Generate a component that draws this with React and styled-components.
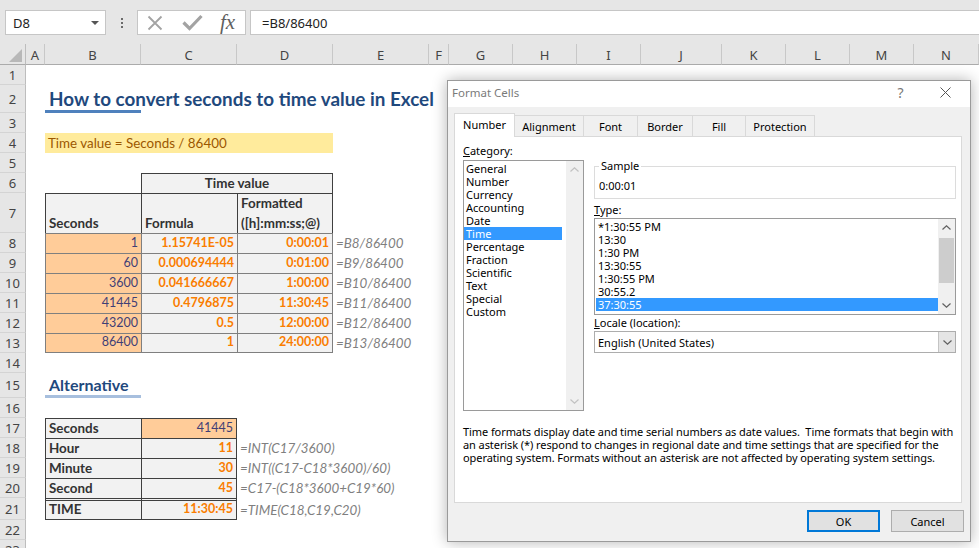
import React from 'react'
import styled, { createGlobalStyle, css } from 'styled-components'

const GlobalStyle = createGlobalStyle`
  html, body {
    margin: 0;
    padding: 0;
    background: #fff;
    overflow: hidden;
  }
  * {
    box-sizing: border-box;
  }
`

const COL_LETTERS = ['A', 'B', 'C', 'D', 'E', 'F', 'G', 'H', 'I', 'J', 'K', 'L', 'M', 'N']
const COL_WIDTHS = [26, 19, 96, 96, 96, 96, 20, 64, 64, 64, 81, 64, 64, 64, 65]
// sheet rows 1..23
const ROW_HEIGHTS = [20, 28, 20, 20, 20, 20, 40, 20, 20, 20, 20, 20, 20, 20, 25, 20, 20, 20, 20, 20, 22, 20, 20]
const col = (letter) => COL_LETTERS.indexOf(letter) + 2

const Window = styled.div`
  position: relative;
  width: 979px;
  height: 548px;
  overflow: hidden;
  background: #fff;
  font-family: Lato, 'Liberation Sans', sans-serif;
`

/* ---------- formula bar ---------- */

const TopBar = styled.div`
  display: flex;
  align-items: flex-start;
  height: 44px;
  padding: 10px 0 0 5px;
  background: #e6e6e6;
  font-family: 'Noto Sans', sans-serif;
`

const NameBox = styled.div`
  display: flex;
  align-items: center;
  justify-content: space-between;
  width: 101px;
  height: 25px;
  padding: 0 6px 0 7px;
  background: #fff;
  border: 1px solid #c6c6c6;
  font-size: 13px;
  color: #222;
`

const Caret = styled.span`
  width: 0;
  height: 0;
  border-left: 4px solid transparent;
  border-right: 4px solid transparent;
  border-top: 4px solid #555;
`

const Dots = styled.div`
  display: flex;
  flex-direction: column;
  align-items: center;
  justify-content: center;
  gap: 2px;
  width: 31px;
  height: 25px;

  span {
    width: 2px;
    height: 2px;
    background: #6a6a6a;
  }
`

const FxBox = styled.div`
  display: flex;
  align-items: center;
  width: 109px;
  height: 25px;
  padding-left: 9px;
  background: #fff;
  border: 1px solid #c6c6c6;
`

const Fx = styled.span`
  margin-left: 17px;
  font-family: 'Liberation Serif', serif;
  font-style: italic;
  font-size: 21px;
  line-height: 21px;
  color: #5f5f5f;
`

const FormulaInput = styled.div`
  flex: 1;
  display: flex;
  align-items: center;
  height: 25px;
  margin-left: 4px;
  padding-left: 11px;
  background: #fff;
  border: 1px solid #c6c6c6;
  border-right: none;
  font-size: 13px;
  color: #222;
`

/* ---------- sheet ---------- */

const Sheet = styled.div`
  display: grid;
  grid-template-columns: ${COL_WIDTHS.map((w) => w + 'px').join(' ')};
  grid-template-rows: 21px ${ROW_HEIGHTS.map((h) => h + 'px').join(' ')};
`

const Corner = styled.div`
  position: relative;
  grid-column: 1;
  grid-row: 1;
  background: #e6e6e6;
  border-right: 1px solid #bdbdbd;
  border-bottom: 1px solid #ababab;

  &::after {
    content: '';
    position: absolute;
    right: 3px;
    bottom: 2px;
    border-left: 13px solid transparent;
    border-bottom: 13px solid #b8b8b8;
  }
`

const ColHead = styled.div`
  grid-column: ${(p) => p.$c};
  grid-row: 1;
  display: flex;
  align-items: center;
  justify-content: center;
  padding-top: 2px;
  background: #e6e6e6;
  border-right: 1px solid #c8c8c8;
  border-bottom: 1px solid #ababab;
  font-family: 'Noto Sans', sans-serif;
  font-size: 13px;
  color: #444;
`

const RowHead = styled.div`
  grid-column: 1;
  grid-row: ${(p) => p.$r};
  display: flex;
  align-items: center;
  justify-content: center;
  background: #e6e6e6;
  border-right: 1px solid #bdbdbd;
  border-bottom: 1px solid #d4d4d4;
  font-family: 'Noto Sans', sans-serif;
  font-size: 13px;
  color: #444;
`

const kinds = {
  head: css`
    background: #f2f2f2;
    color: #333;
    font-weight: 700;
  `,
  input: css`
    background: #ffcc99;
    color: #3f3f76;
  `,
  calc: css`
    background: #f2f2f2;
    color: #fa7d00;
    font-weight: 700;
  `,
  note: css`
    color: #7f7f7f;
    font-style: italic;
  `,
  neutral: css`
    background: #ffeb9c;
    color: #9c5700;
  `,
}

const edge = (p, side, key) =>
  p.$b && p.$b.includes(key) ? `border-${side}: 1px solid ${p.$bc || '#7f7f7f'};` : ''

const Cell = styled.div`
  grid-column: ${(p) => p.$c} / span ${(p) => p.$span || 1};
  grid-row: ${(p) => p.$r + 1};
  display: flex;
  align-items: flex-end;
  justify-content: ${(p) => ({ right: 'flex-end', center: 'center' }[p.$align] || 'flex-start')};
  padding: 0 3px 1px 3px;
  font-size: ${(p) => (p.$num ? 12.5 : 13.4)}px;
  line-height: 18px;
  white-space: nowrap;
  ${(p) => edge(p, 'top', 't')}
  ${(p) => edge(p, 'left', 'l')}
  ${(p) => edge(p, 'right', 'r')}
  ${(p) => edge(p, 'bottom', 'b')}
  ${(p) => p.$dbl && 'border-top: 3px double #3f3f3f;'}
  ${(p) => kinds[p.$kind]}
`

const WrapCell = styled(Cell)`
  white-space: normal;
  line-height: 20px;
  padding-bottom: 0;
`

const Heading = styled.div`
  grid-column: ${(p) => p.$c};
  grid-row: ${(p) => p.$r + 1};
  display: flex;
  align-items: flex-end;
  padding: 0 4px;
  border-bottom: 3px solid ${(p) => (p.$level === 1 ? '#4f81bd' : '#a7bfde')};
  font-size: ${(p) => (p.$level === 1 ? 18.85 : 16)}px;
  line-height: ${(p) => (p.$level === 1 ? 22 : 20)}px;
  font-weight: 700;
  color: #1f497d;
  white-space: nowrap;
`

/* ---------- dialog ---------- */

const Dialog = styled.div`
  position: absolute;
  left: 447px;
  top: 80px;
  width: 524px;
  height: 462px;
  display: flex;
  flex-direction: column;
  background: #f0f0f0;
  border: 1px solid #9a9a9a;
  box-shadow: 0 0 14px rgba(0, 0, 0, 0.3);
  font-family: 'Noto Sans', sans-serif;
  font-size: 11px;
  color: #000;
`

const TitleBar = styled.div`
  display: flex;
  align-items: center;
  height: 26px;
  padding: 0 0 3px 4px;
  background: #fff;
  font-size: 11.5px;
  color: #7a7a7a;
`

const TitleText = styled.span`
  flex: 1;
`

const Help = styled.span`
  width: 45px;
  text-align: center;
  font-size: 14px;
  color: #777;
`

const Close = styled.span`
  display: flex;
  justify-content: center;
  width: 45px;
  margin-right: 2px;
`

const Body = styled.div`
  flex: 1;
  display: flex;
  flex-direction: column;
  padding: 6px 7px 0 6px;
`

const Tabs = styled.div`
  display: flex;
  align-items: flex-end;
  height: 23px;
`

const Tab = styled.div`
  position: relative;
  z-index: ${(p) => (p.$active ? 1 : 0)};
  display: flex;
  align-items: center;
  justify-content: center;
  width: ${(p) => p.$w}px;
  height: ${(p) => (p.$active ? 24 : 21)}px;
  margin-left: ${(p) => (p.$first ? 0 : -1)}px;
  margin-bottom: ${(p) => (p.$active ? -1 : 0)}px;
  padding-bottom: ${(p) => (p.$active ? 2 : 0)}px;
  background: ${(p) => (p.$active ? '#fff' : '#f0f0f0')};
  border: 1px solid #d9d9d9;
  border-bottom: none;
`

const Panel = styled.div`
  width: 508px;
  height: 367px;
  padding: 6px 5px 0 8px;
  background: #fff;
  border: 1px solid #d9d9d9;
`

const PanelGrid = styled.div`
  display: grid;
  grid-template-columns: 121px 362px;
  column-gap: 10px;
`

const Column = styled.div`
  display: flex;
  flex-direction: column;
`

const Label = styled.div`
  margin-top: ${(p) => p.$mt || 0}px;
  line-height: 15px;
`

const ListBox = styled.div`
  display: flex;
  height: ${(p) => p.$h}px;
  margin-top: ${(p) => p.$mt || 0}px;
  background: #fff;
  border: 1px solid #9a9a9a;
`

const Items = styled.div`
  flex: 1;
  padding: ${(p) => p.$pad};
`

const Item = styled.div`
  height: 13px;
  padding-left: 2px;
  line-height: 13px;
  white-space: nowrap;
  background: ${(p) => (p.$sel ? '#3399ff' : 'transparent')};
  color: ${(p) => (p.$sel ? '#fff' : '#000')};
`

const Scrollbar = styled.div`
  display: flex;
  flex-direction: column;
  width: 17px;
  background: #f0f0f0;
`

const Arrow = styled.div`
  display: flex;
  align-items: center;
  justify-content: center;
  height: 17px;
`

const Track = styled.div`
  flex: 1;
  padding: 2px 1px 0;
`

const Thumb = styled.div`
  height: 45px;
  background: #cdcdcd;
`

const SampleBox = styled.fieldset`
  height: 40px;
  min-width: 0;
  margin: 16px 0 0;
  padding: 0 4px;
  border: 1px solid #dcdcdc;
`

const Legend = styled.legend`
  padding: 0 2px;
  line-height: 14px;
`

const SampleValue = styled.div`
  margin-top: 6px;
  line-height: 14px;
`

const Combo = styled.div`
  display: flex;
  height: 22px;
  margin-top: 1px;
  background: #fff;
  border: 1px solid #adadad;
`

const ComboText = styled.div`
  flex: 1;
  display: flex;
  align-items: center;
  padding-left: 3px;
`

const ComboButton = styled.div`
  display: flex;
  align-items: center;
  justify-content: center;
  width: 17px;
  background: #e5e5e5;
  border-left: 1px solid #c4c4c4;
`

const Description = styled.div`
  margin-top: 14px;
  line-height: 13px;
  letter-spacing: -0.08px;

  span {
    display: block;
    white-space: nowrap;
  }
`

const Buttons = styled.div`
  display: flex;
  justify-content: flex-end;
  gap: 11px;
  margin-top: 7px;
  margin-right: -1px;
`

const Button = styled.div`
  display: flex;
  align-items: center;
  justify-content: center;
  width: 73px;
  height: 22px;
  background: #e1e1e1;
  border: ${(p) => (p.$primary ? '2px solid #0078d7' : '1px solid #adadad')};
`

const Chevron = ({ up, color }) => (
  <svg width="9" height="5" viewBox="0 0 9 5">
    <path
      d={up ? 'M0.5 4.5 L4.5 0.8 L8.5 4.5' : 'M0.5 0.5 L4.5 4.2 L8.5 0.5'}
      stroke={color}
      strokeWidth="1.2"
      fill="none"
    />
  </svg>
)

const seconds = [
  { s: '1', f: '1.15741E-05', t: '0:00:01' },
  { s: '60', f: '0.000694444', t: '0:01:00' },
  { s: '3600', f: '0.041666667', t: '1:00:00' },
  { s: '41445', f: '0.4796875', t: '11:30:45' },
  { s: '43200', f: '0.5', t: '12:00:00' },
  { s: '86400', f: '1', t: '24:00:00' },
]

const alternative = [
  { label: 'Hour', value: '11', note: '=INT(C17/3600)' },
  { label: 'Minute', value: '30', note: '=INT((C17-C18*3600)/60)' },
  { label: 'Second', value: '45', note: '=C17-(C18*3600+C19*60)' },
]

const categories = ['General', 'Number', 'Currency', 'Accounting', 'Date', 'Time', 'Percentage', 'Fraction', 'Scientific', 'Text', 'Special', 'Custom']
const types = ['*1:30:55 PM', '13:30', '1:30 PM', '13:30:55', '1:30:55 PM', '30:55.2', '37:30:55']
const tabs = [
  ['Number', 61],
  ['Alignment', 70],
  ['Font', 55],
  ['Border', 56],
  ['Fill', 54],
  ['Protection', 70],
]

const HEAD = '#3f3f3f'

export default function App() {
  return (
    <Window>
      <GlobalStyle />
      <TopBar>
        <NameBox>
          D8
          <Caret />
        </NameBox>
        <Dots>
          <span />
          <span />
          <span />
        </Dots>
        <FxBox>
          <svg width="16" height="16" viewBox="0 0 16 16">
            <path d="M1.5 1.5 L14.5 14.5 M14.5 1.5 L1.5 14.5" stroke="#a3a3a3" strokeWidth="1.8" />
          </svg>
          <svg width="21" height="17" viewBox="0 0 21 17" style={{ marginLeft: 19 }}>
            <path d="M1.5 8.5 L7.5 14.5 L19.5 2" stroke="#a3a3a3" strokeWidth="3.2" fill="none" />
          </svg>
          <Fx>fx</Fx>
        </FxBox>
        <FormulaInput>=B8/86400</FormulaInput>
      </TopBar>

      <Sheet>
        <Corner />
        {COL_LETTERS.map((l, i) => (
          <ColHead key={l} $c={i + 2}>
            {l}
          </ColHead>
        ))}
        {ROW_HEIGHTS.map((_, i) => (
          <RowHead key={i} $r={i + 2}>
            {i + 1}
          </RowHead>
        ))}

        <Heading $c={col('B')} $r={2} $level={1}>
          How to convert seconds to time value in Excel
        </Heading>

        <Cell $c={col('B')} $r={4} $span={3} $kind="neutral">
          Time value = Seconds / 86400
        </Cell>

        <Cell $c={col('C')} $r={6} $span={2} $align="center" $kind="head" $b="ltr" $bc={HEAD}>
          Time value
        </Cell>
        <Cell $c={col('B')} $r={7} $kind="head" $b="lt" $bc={HEAD}>
          Seconds
        </Cell>
        <Cell $c={col('C')} $r={7} $kind="head" $b="lt" $bc={HEAD}>
          Formula
        </Cell>
        <WrapCell $c={col('D')} $r={7} $kind="head" $b="ltr" $bc={HEAD}>
          Formatted
          <br />
          ([h]:mm:ss;@)
        </WrapCell>

        {seconds.map((row, i) => {
          const r = 8 + i
          const last = i === seconds.length - 1
          return (
            <React.Fragment key={r}>
              <Cell $c={col('B')} $r={r} $align="right" $num $kind="input" $b={last ? 'ltb' : 'lt'}>
                {row.s}
              </Cell>
              <Cell $c={col('C')} $r={r} $align="right" $num $kind="calc" $b={last ? 'ltb' : 'lt'}>
                {row.f}
              </Cell>
              <Cell $c={col('D')} $r={r} $align="right" $num $kind="calc" $b={last ? 'ltrb' : 'ltr'}>
                {row.t}
              </Cell>
              <Cell $c={col('E')} $r={r} $kind="note">
                =B{r}/86400
              </Cell>
            </React.Fragment>
          )
        })}

        <Heading $c={col('B')} $r={15} $level={2}>
          Alternative
        </Heading>

        <Cell $c={col('B')} $r={17} $kind="head" $b="lt" $bc={HEAD}>
          Seconds
        </Cell>
        <Cell $c={col('C')} $r={17} $align="right" $num $kind="input" $b="ltr" $bc={HEAD}>
          41445
        </Cell>
        {alternative.map((row, i) => (
          <React.Fragment key={row.label}>
            <Cell $c={col('B')} $r={18 + i} $kind="head" $b="lt" $bc={HEAD}>
              {row.label}
            </Cell>
            <Cell $c={col('C')} $r={18 + i} $align="right" $num $kind="calc" $b="ltr" $bc={HEAD}>
              {row.value}
            </Cell>
            <Cell $c={col('D')} $r={18 + i} $kind="note">
              {row.note}
            </Cell>
          </React.Fragment>
        ))}
        <Cell $c={col('B')} $r={21} $kind="head" $b="lb" $bc={HEAD} $dbl>
          TIME
        </Cell>
        <Cell $c={col('C')} $r={21} $align="right" $num $kind="calc" $b="lrb" $bc={HEAD} $dbl>
          11:30:45
        </Cell>
        <Cell $c={col('D')} $r={21} $kind="note">
          =TIME(C18,C19,C20)
        </Cell>
      </Sheet>

      <Dialog>
        <TitleBar>
          <TitleText>Format Cells</TitleText>
          <Help>?</Help>
          <Close>
            <svg width="11" height="11" viewBox="0 0 11 11">
              <path d="M0.5 0.5 L10.5 10.5 M10.5 0.5 L0.5 10.5" stroke="#555" strokeWidth="1" />
            </svg>
          </Close>
        </TitleBar>
        <Body>
          <Tabs>
            {tabs.map(([name, w], i) => (
              <Tab key={name} $w={w} $first={i === 0} $active={i === 0}>
                {name}
              </Tab>
            ))}
          </Tabs>
          <Panel>
            <PanelGrid>
              <Column>
                <Label>
                  <u>C</u>ategory:
                </Label>
                <ListBox $h={251} $mt={2}>
                  <Items $pad="1px 4px 0 0">
                    {categories.map((c) => (
                      <Item key={c} $sel={c === 'Time'}>
                        {c}
                      </Item>
                    ))}
                  </Items>
                  <Scrollbar>
                    <Arrow>
                      <Chevron up color="#c2c2c2" />
                    </Arrow>
                    <Track />
                    <Arrow>
                      <Chevron color="#c2c2c2" />
                    </Arrow>
                  </Scrollbar>
                </ListBox>
              </Column>
              <Column>
                <SampleBox>
                  <Legend>Sample</Legend>
                  <SampleValue>0:00:01</SampleValue>
                </SampleBox>
                <Label $mt={3}>
                  <u>T</u>ype:
                </Label>
                <ListBox $h={97} $mt={1}>
                  <Items $pad="1px 0 0 1px">
                    {types.map((t) => (
                      <Item key={t} $sel={t === '37:30:55'}>
                        {t}
                      </Item>
                    ))}
                  </Items>
                  <Scrollbar>
                    <Arrow>
                      <Chevron up color="#606060" />
                    </Arrow>
                    <Track>
                      <Thumb />
                    </Track>
                    <Arrow>
                      <Chevron color="#606060" />
                    </Arrow>
                  </Scrollbar>
                </ListBox>
                <Label>
                  <u>L</u>ocale (location):
                </Label>
                <Combo>
                  <ComboText>English (United States)</ComboText>
                  <ComboButton>
                    <Chevron color="#606060" />
                  </ComboButton>
                </Combo>
              </Column>
            </PanelGrid>
            <Description>
              <span>Time formats display date and time serial numbers as date values.&nbsp; Time formats that begin with</span>
              <span>an asterisk (*) respond to changes in regional date and time settings that are specified for the</span>
              <span>operating system. Formats without an asterisk are not affected by operating system settings.</span>
            </Description>
          </Panel>
          <Buttons>
            <Button $primary>OK</Button>
            <Button>Cancel</Button>
          </Buttons>
        </Body>
      </Dialog>
    </Window>
  )
}
